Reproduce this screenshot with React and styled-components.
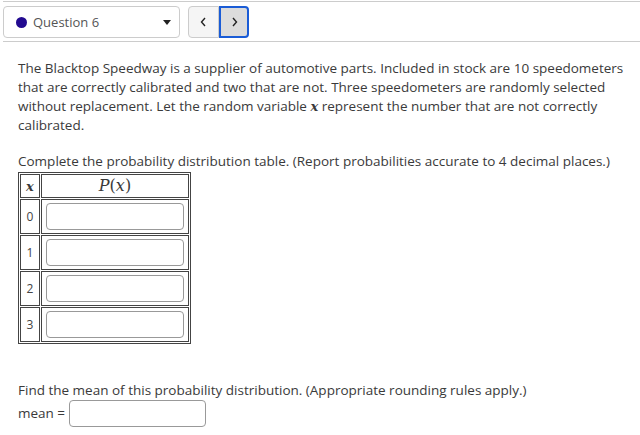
import React from 'react';
import styled, { createGlobalStyle } from 'styled-components';

const GlobalStyle = createGlobalStyle`
  body {
    margin: 0;
    background: #fff;
    font-family: "Open Sans", "Liberation Sans", sans-serif;
    color: #3a3a3a;
  }
`;

const NavBar = styled.div`
  margin: 1px 0 0 3px;
  height: 41px;
  border-top: 1px solid #ccc;
  border-bottom: 1px solid #ccc;
  display: flex;
  align-items: flex-start;
  gap: 8px;
  padding-top: 4px;
  box-sizing: border-box;
`;

const QuestionSelect = styled.div`
  width: 177px;
  height: 32px;
  box-sizing: border-box;
  border: 1px solid #ccc;
  border-radius: 4px;
  display: flex;
  align-items: center;
  padding: 0 8px 0 12px;
  font-size: 13px;
  color: #555;
`;

const Dot = styled.span`
  width: 11px;
  height: 11px;
  border-radius: 50%;
  background: #220a90;
  margin-right: 6px;
`;

const Caret = styled.span`
  margin-left: auto;
  width: 0;
  height: 0;
  border-left: 4px solid transparent;
  border-right: 4px solid transparent;
  border-top: 5px solid #222;
`;

const NavButtons = styled.div`
  display: flex;
`;

const NavButton = styled.button`
  width: ${p => (p.$active ? 30 : 31)}px;
  height: 32px;
  box-sizing: border-box;
  border: ${p => (p.$active ? '2px solid #1a5cd6' : '1px solid #ccc')};
  background: ${p => (p.$active ? '#dcdcdc' : '#f5f5f5')};
  border-radius: ${p => (p.$active ? '0 4px 4px 0' : '4px 0 0 4px')};
  display: flex;
  align-items: center;
  justify-content: center;
  padding: 0;
`;

const Content = styled.div`
  padding: 17px 0 0 18px;
  font-size: 13.5px;
  line-height: 19px;
`;

const Para = styled.p`
  margin: 0 0 ${p => p.$gap || 0}px 0;
  padding-right: 10px;
`;

const MathVar = styled.span`
  font-family: "DejaVu Serif", "Liberation Serif", serif;
  font-style: italic;
  font-weight: ${p => (p.$bold ? 700 : 400)};
  font-size: ${p => p.$size || 13}px;
  line-height: 1;
`;

const Upright = styled.span`
  font-style: normal;
`;

const DistTable = styled.table`
  border: 1px solid #444;
  border-spacing: 1px;
  margin: 1px 0 37px 0;
`;

const HeadCell = styled.th`
  border: 1px solid #444;
  height: 22px;
  padding: 0;
  font-weight: 400;
  text-align: center;
  width: ${p => p.$w}px;
`;

const Cell = styled.td`
  border: 1px solid #444;
  padding: 3px 4px;
  text-align: center;
  font-size: 12px;
  color: #444;
`;

const NumInput = styled.input`
  box-sizing: border-box;
  width: ${p => p.$w || 138}px;
  height: 27px;
  border: 1px solid #999;
  border-radius: 4px;
  display: block;
  background: #fff;
`;

const MeanRow = styled.div`
  display: flex;
  align-items: center;
  gap: 4px;
  margin-top: 0;
`;

const Chevron = ({ dir }) => (
  <svg width="7" height="10" viewBox="0 0 7 10">
    <path
      d={dir === 'left' ? 'M5 1 L1.5 5 L5 9' : 'M2 1 L5.5 5 L2 9'}
      fill="none"
      stroke="#222"
      strokeWidth="1.4"
    />
  </svg>
);

const rows = [0, 1, 2, 3];

const App = () => (
  <>
    <GlobalStyle />
    <NavBar>
      <QuestionSelect>
        <Dot />
        Question 6
        <Caret />
      </QuestionSelect>
      <NavButtons>
        <NavButton>
          <Chevron dir="left" />
        </NavButton>
        <NavButton $active>
          <Chevron dir="right" />
        </NavButton>
      </NavButtons>
    </NavBar>
    <Content>
      <Para $gap={17}>
        The Blacktop Speedway is a supplier of automotive parts. Included in stock are 10 speedometers
        that are correctly calibrated and two that are not. Three speedometers are randomly selected
        without replacement. Let the random variable <MathVar $bold>x</MathVar> represent the number that are not correctly
        calibrated.
      </Para>
      <Para>
        Complete the probability distribution table. (Report probabilities accurate to 4 decimal places.)
      </Para>
      <DistTable>
        <thead>
          <tr>
            <HeadCell $w={18}>
              <MathVar $bold $size={13}>x</MathVar>
            </HeadCell>
            <HeadCell>
              <MathVar $size={16}>
                P<Upright>(</Upright>x<Upright>)</Upright>
              </MathVar>
            </HeadCell>
          </tr>
        </thead>
        <tbody>
          {rows.map(r => (
            <tr key={r}>
              <Cell>{r}</Cell>
              <Cell>
                <NumInput />
              </Cell>
            </tr>
          ))}
        </tbody>
      </DistTable>
      <Para>
        Find the mean of this probability distribution. (Appropriate rounding rules apply.)
      </Para>
      <MeanRow>
        mean =
        <NumInput $w={137} />
      </MeanRow>
    </Content>
  </>
);

export default App;
